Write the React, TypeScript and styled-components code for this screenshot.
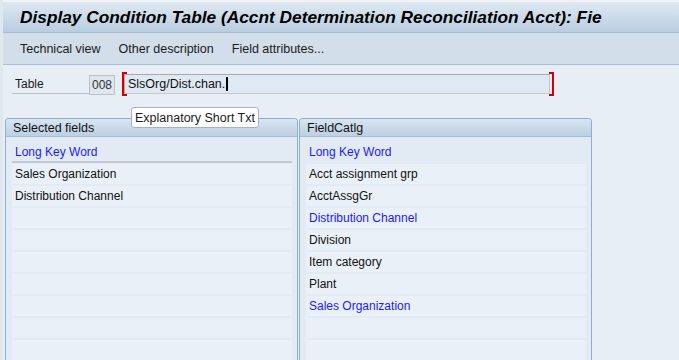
import { createGlobalStyle, styled } from 'styled-components'

const GlobalStyle = createGlobalStyle`
    html, body {
        margin: 0;
        padding: 0;
        background: #e8eef5;
    }
    body {
        font-family: "Liberation Sans", Tahoma, sans-serif;
        font-size: 12px;
        color: #1a1a1a;
    }
`

const Screen = styled.div`
    width: 679px;
    height: 360px;
    overflow: hidden;
    display: flex;
    flex-direction: column;
    border-left: 3px solid #dfe7ef;
    box-sizing: border-box;
`

const TitleBar = styled.div`
    flex-shrink: 0;
    height: 30px;
    border-top: 2px solid #f0f4f8;
    border-bottom: 1px solid #a8bcd0;
    background: linear-gradient(#dfe8f1, #b9cde1);
    display: flex;
    align-items: center;
    padding-left: 17px;

    h1{
        margin: 0;
        font-size: 17.3px;
        font-weight: bold;
        font-style: italic;
        color: #000;
        white-space: nowrap;
    }
`

const Toolbar = styled.div`
    flex-shrink: 0;
    height: 32px;
    background: #d2deea;
    border-bottom: 1px solid #aabdd1;
    display: flex;
    align-items: center;
    gap: 18px;
    padding: 1px 0 0 17px;
    box-sizing: border-box;
    font-size: 12.5px;
    color: #1a1a1a;
`

const Body = styled.div`
    position: relative;
    flex: 1;
    padding: 8px 0 0 2px;
`

const FieldLine = styled.div`
    display: flex;
    align-items: center;
    height: 22px;
`

const Label = styled.div`
    width: 103px;
    height: 20px;
    box-sizing: border-box;
    display: flex;
    align-items: center;
    justify-content: space-between;
    padding: 1px 0 0 3px;
    margin-left: 7px;
    border-bottom: 1px solid #b7c0c9;
`

const CodeBox = styled.div`
    width: 26px;
    height: 20px;
    box-sizing: border-box;
    border: 1px solid #b9c0c7;
    background: #dfe6ed;
    color: #333;
    display: flex;
    align-items: center;
    justify-content: center;
    margin-bottom: -1px;
`

const InputWrap = styled.div`
    position: relative;
    margin-left: 9px;
`

const Input = styled.div`
    width: 426px;
    height: 20px;
    box-sizing: border-box;
    border: 1px solid #a9a9a9;
    border-right-color: #c8c8c8;
    border-bottom-color: #c8c8c8;
    background: #dfe9f3;
    display: flex;
    align-items: center;
    padding-left: 3px;
    font-size: 12.5px;
    color: #111;
`

const Caret = styled.span`
    display: inline-block;
    width: 2px;
    height: 14px;
    background: #000;
    margin-left: 1px;
`

const Bracket = styled.span<{ $side: 'left' | 'right' }>`
    position: absolute;
    top: -2px;
    bottom: -2px;
    width: 3px;
    border: 2px solid #d40000;
    ${ p => p.$side === 'left' ? 'left: -2px; border-right: none;' : 'right: -4px; border-left: none;' }
`

const Tooltip = styled.div`
    position: absolute;
    left: 128px;
    top: 42px;
    height: 21px;
    box-sizing: border-box;
    padding: 0 3px;
    display: flex;
    align-items: center;
    background: #fff;
    border: 1px solid #a9b2bc;
    border-radius: 3px;
    font-size: 12.5px;
    z-index: 2;
`

const Panels = styled.div`
    display: flex;
    gap: 1px;
    margin-top: 23px;
`

const Panel = styled.div`
    width: 293px;
    height: 260px;
    box-sizing: border-box;
    border: 1px solid #8eafcf;
    border-bottom: none;
    border-radius: 4px 4px 0 0;
    background: #e2eaf3;
    display: flex;
    flex-direction: column;
`

const PanelHeader = styled.div`
    flex-shrink: 0;
    height: 16px;
    background: linear-gradient(#d9e5f1, #bccfe3);
    border-bottom: 1px solid #a4bcd4;
    border-radius: 3px 3px 0 0;
    display: flex;
    align-items: center;
    padding: 1px 0 0 7px;
    font-size: 12.5px;
    color: #111;
`

const ListBody = styled.div`
    display: flex;
    flex-direction: column;
    gap: 2px;
    padding: 5px 5px 0 6px;
`

const HeadRow = styled.div<{ $divider?: boolean }>`
    flex-shrink: 0;
    height: 19px;
    display: flex;
    align-items: center;
    padding-left: 3px;
    color: #1a1aff;
    border-bottom: 2px solid ${ p => p.$divider ? '#c4c9ce' : 'transparent' };
    margin-bottom: -1px;
`

const Row = styled.div<{ $blue?: boolean }>`
    flex-shrink: 0;
    height: 20px;
    display: flex;
    align-items: center;
    padding-left: 3px;
    background: #eaf0f7;
    color: ${ p => p.$blue ? '#1a1aff' : '#111' };
`

type Item = { text: string, blue?: boolean }

const selected: Item[] = [
    { text: 'Sales Organization' },
    { text: 'Distribution Channel' },
]

const catalog: Item[] = [
    { text: 'Acct assignment grp' },
    { text: 'AcctAssgGr' },
    { text: 'Distribution Channel', blue: true },
    { text: 'Division' },
    { text: 'Item category' },
    { text: 'Plant' },
    { text: 'Sales Organization', blue: true },
]

const ROWS = 10

const FieldList = ({ title, items, divider }: { title: string, items: Item[], divider?: boolean }) => {
    const filled = [ ...items, ...Array(ROWS - items.length).fill({ text: '' }) ] as Item[]
    return (
        <Panel>
            <PanelHeader>{ title }</PanelHeader>
            <ListBody>
                <HeadRow $divider={ divider }>Long Key Word</HeadRow>
                { filled.map((item, i) => <Row key={ i } $blue={ item.blue }>{ item.text }</Row>) }
            </ListBody>
        </Panel>
    )
}

const App = () => {
    return (
        <>
            <GlobalStyle />
            <Screen>
                <TitleBar>
                    <h1>Display Condition Table (Accnt Determination Reconciliation Acct): Fie</h1>
                </TitleBar>
                <Toolbar>
                    <span>Technical view</span>
                    <span>Other description</span>
                    <span>Field attributes...</span>
                </Toolbar>
                <Body>
                    <FieldLine>
                        <Label>
                            <span>Table</span>
                            <CodeBox>008</CodeBox>
                        </Label>
                        <InputWrap>
                            <Input>SlsOrg/Dist.chan.<Caret /></Input>
                            <Bracket $side='left' />
                            <Bracket $side='right' />
                        </InputWrap>
                    </FieldLine>
                    <Tooltip>Explanatory Short Txt</Tooltip>
                    <Panels>
                        <FieldList title='Selected fields' items={ selected } divider />
                        <FieldList title='FieldCatlg' items={ catalog } />
                    </Panels>
                </Body>
            </Screen>
        </>
    )
}

export default App
